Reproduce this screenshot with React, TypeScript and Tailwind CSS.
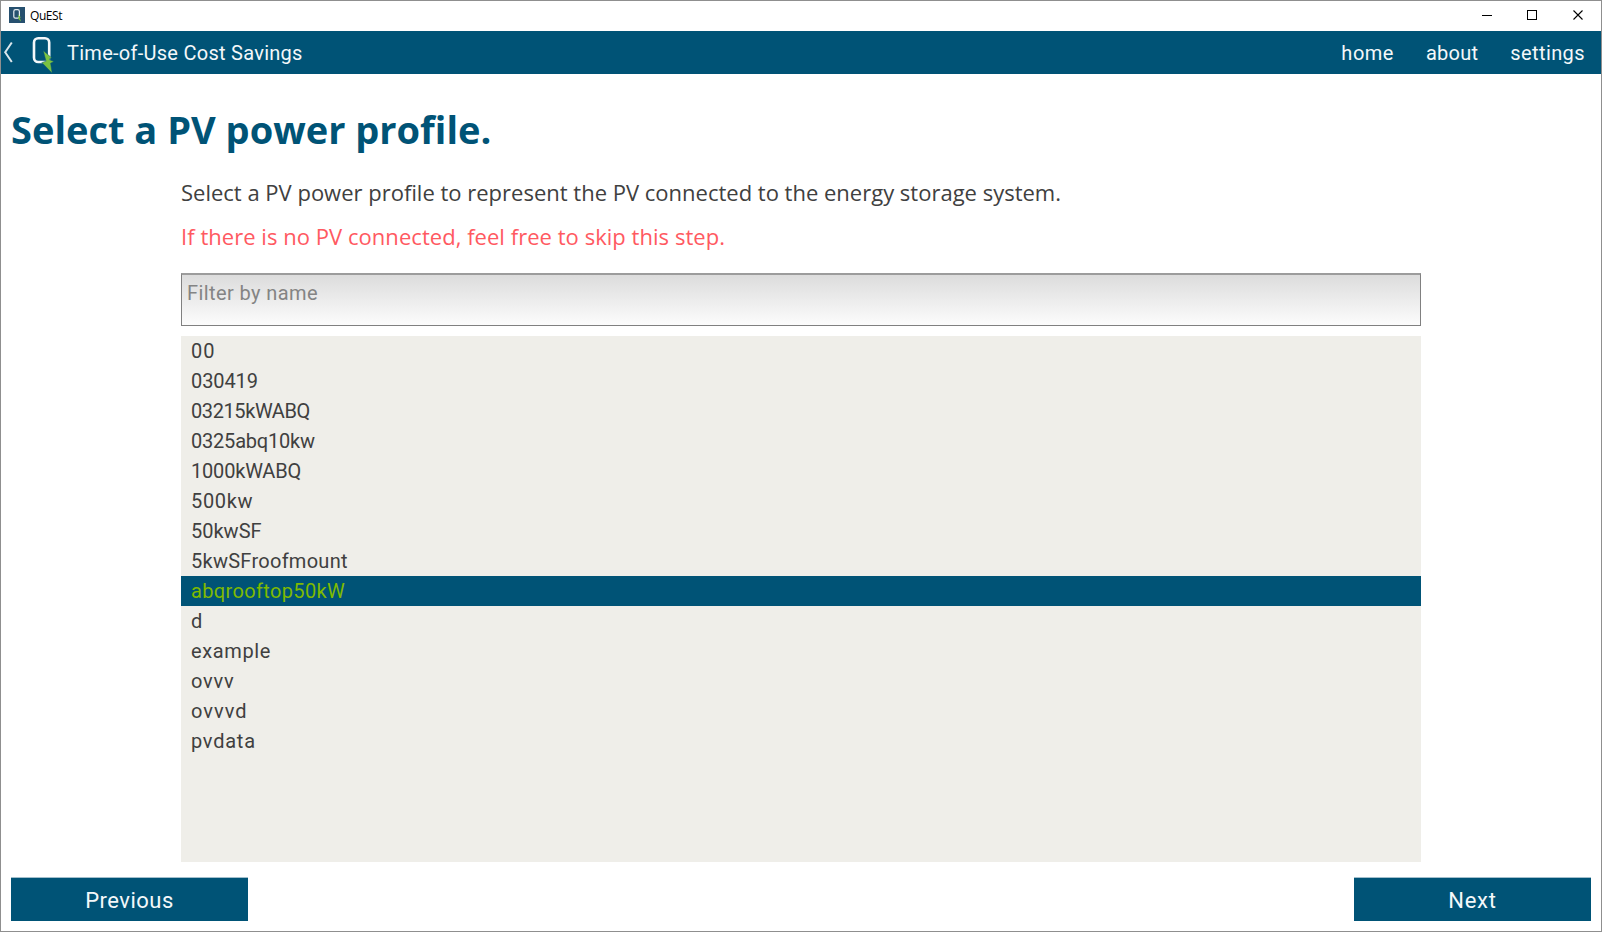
import React from "react";

const profiles = [
  { name: "00", spacing: "tracking-[1px]" },
  { name: "030419", spacing: "tracking-[-0.1px]" },
  { name: "03215kWABQ", spacing: "tracking-[-0.4px]" },
  { name: "0325abq10kw", spacing: "tracking-[-0.2px]" },
  { name: "1000kWABQ", spacing: "tracking-[-0.18px]" },
  { name: "500kw", spacing: "tracking-[0.66px]" },
  { name: "50kwSF", spacing: "tracking-[0px]" },
  { name: "5kwSFroofmount", spacing: "tracking-[0.27px]" },
  { name: "abqrooftop50kW", spacing: "tracking-[0.35px]" },
  { name: "d", spacing: "tracking-[0px]" },
  { name: "example", spacing: "tracking-[0.62px]" },
  { name: "ovvv", spacing: "tracking-[0.8px]" },
  { name: "ovvvd", spacing: "tracking-[1px]" },
  { name: "pvdata", spacing: "tracking-[0.75px]" },
];

const selected = "abqrooftop50kW";

function TitleBar() {
  return (
    <div className="flex h-[30px] shrink-0 items-center bg-white pl-2 text-black">
      <svg width="16" height="16" viewBox="0 0 16 16" className="mt-[-2px]">
        <rect width="16" height="16" fill="#26506f" />
        <rect x="4.8" y="2.6" width="5.6" height="8.6" rx="1.8" fill="none" stroke="#e8eef2" strokeWidth="1.2" />
        <path d="M8.6 7.4 L12 10.2 L10.8 10.8 L12 14.4 L8.8 11.4 L10 10.9 Z" fill="#7ac142" />
      </svg>
      <span className="ml-[5px] mt-[-1px] text-[12px] leading-4 tracking-[-0.45px] font-['Open_Sans',sans-serif]">QuESt</span>
      <div className="ml-auto mt-[-2px] flex items-center pr-4">
        <svg width="104" height="12" viewBox="0 0 104 12" fill="none" stroke="#000" shapeRendering="crispEdges">
          <path d="M1 6.5 H11" />
          <rect x="46.5" y="1.5" width="9" height="9" />
          <path d="M92.5 1.5 L101.5 10.5 M101.5 1.5 L92.5 10.5" shapeRendering="auto" strokeWidth="1.1" />
        </svg>
      </div>
    </div>
  );
}

function NavBar() {
  return (
    <header className="flex h-[43px] shrink-0 items-center bg-[#005376] text-[20px] leading-6 text-[#f4f8fa]">
      <svg width="62" height="43" viewBox="0 0 62 43" fill="none">
        <path d="M10.8 11.5 L4.2 21.2 L10.8 31" stroke="#dbe7ec" strokeWidth="2" />
        <rect x="33" y="7.2" width="15.2" height="23.8" rx="4.2" stroke="#f4f8fa" strokeWidth="2.6" />
        <path
          d="M42.2 19.5 L50.6 26.8 L48 28.4 L53 30.6 L49.6 32.2 L51.2 42.2 L40.8 31.6 L45 30.2 Z"
          fill="#7ac142"
          stroke="#005376"
          strokeWidth="0.5"
        />
      </svg>
      <span className="ml-1 tracking-[0.27px]">Time-of-Use Cost Savings</span>
      <nav className="ml-auto flex gap-8 pr-4">
        <span className="tracking-[0.5px]">home</span>
        <span className="tracking-[0.24px]">about</span>
        <span className="tracking-[0.41px]">settings</span>
      </nav>
    </header>
  );
}

export default function App() {
  return (
    <div className="flex h-[932px] w-[1602px] flex-col overflow-hidden border border-[#8f8f8f] bg-white font-['Roboto',sans-serif] text-[#404040]">
      <TitleBar />
      <NavBar />
      <h1 className="mt-[29px] h-[52px] pl-[10px] text-[38px] leading-[52px] font-bold text-[#005376] font-['Open_Sans',sans-serif]">
        Select a PV power profile.
      </h1>
      <main className="mt-[22px] ml-[180px] flex w-[1240px] flex-col">
        <p className="h-[30px] text-[22px] leading-[30px] font-['Open_Sans',sans-serif]">
          Select a PV power profile to represent the PV connected to the energy storage system.
        </p>
        <p className="mt-[14px] h-[30px] text-[22px] leading-[30px] tracking-[0.04px] text-[#ff5961] font-['Open_Sans',sans-serif]">
          If there is no PV connected, feel free to skip this step.
        </p>
        <div className="mt-[22px] flex h-[53px] items-start border border-t-2 border-[#808080] border-t-[#9c9c9c] bg-linear-to-b from-[#dcdcdc] to-[#fcfcfc] pt-[6px] pl-[5px] text-[20px] leading-6 tracking-[0.4px] text-[#848484]">
          Filter by name
        </div>
        <ul className="mt-[10px] h-[526px] bg-[#efeee9] text-[20px] leading-[30px]">
          {profiles.map(({ name, spacing }) => (
            <li
              key={name}
              className={`h-[30px] pl-[10px] ${spacing} ${name === selected ? "bg-[#005376] text-[#7fba00]" : ""}`}
            >
              {name}
            </li>
          ))}
        </ul>
      </main>
      <footer className="mt-[15px] flex justify-between px-[10px] text-[22px] text-[#f4f8fa]">
        <button className="h-[44px] w-[237px] border-t border-[#a3bfcc] bg-[#005376] pt-px tracking-[0.5px]">Previous</button>
        <button className="h-[44px] w-[237px] border-t border-[#a3bfcc] bg-[#005376] pt-px tracking-[0.8px]">Next</button>
      </footer>
    </div>
  );
}
